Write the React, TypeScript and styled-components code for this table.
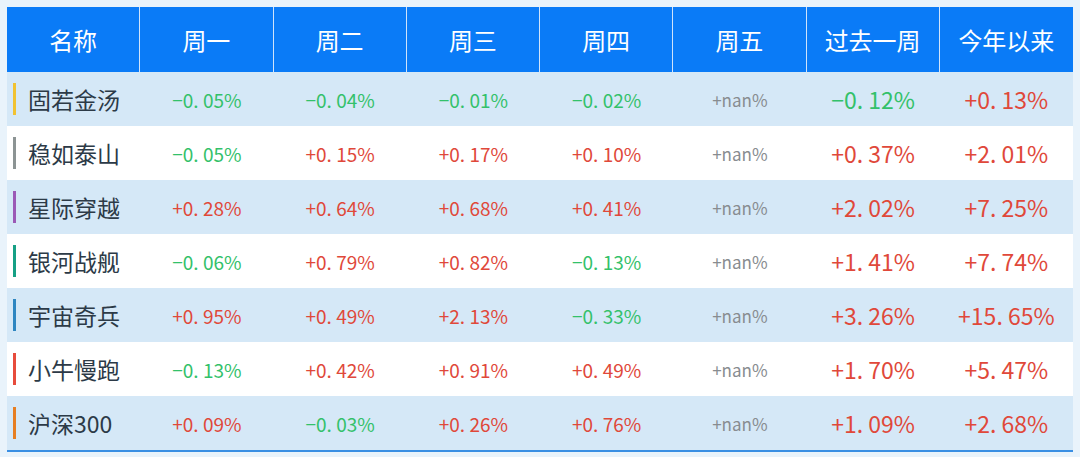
import React from "react";
import styled, { createGlobalStyle } from "styled-components";

const GlobalStyle = createGlobalStyle`
  html, body {
    margin: 0;
    padding: 0;
    background: #e9f3fb;
  }
  body {
    font-family: "Noto Sans CJK SC", "Noto Sans", sans-serif;
  }
`;

const Page = styled.div`
  width: 1080px;
  height: 457px;
  padding: 7px 7px 0 7px;
  box-sizing: border-box;
  background: #e9f3fb;
`;

const Table = styled.div`
  display: grid;
  grid-template-columns: repeat(8, 1fr);
  width: 1066px;
  border-bottom: 2px solid #3a8fe3;
`;

const HeadCell = styled.div<{ $last?: boolean }>`
  height: 65px;
  background: #0a7bf7;
  color: #ffffff;
  font-size: 24px;
  display: flex;
  align-items: center;
  justify-content: center;
  border-right: ${(p) => (p.$last ? "none" : "1px solid #cfe3fb")};
  box-sizing: border-box;
`;

const Cell = styled.div<{ $odd: boolean }>`
  height: 54px;
  background: ${(p) => (p.$odd ? "#d5e8f7" : "#ffffff")};
  display: flex;
  align-items: center;
  justify-content: center;
  box-sizing: border-box;
`;

const NameCell = styled(Cell)`
  justify-content: flex-start;
  padding-left: 6px;
  gap: 12px;
`;

const Bar = styled.span<{ $color: string }>`
  width: 3px;
  height: 32px;
  background: ${(p) => p.$color};
  flex: none;
`;

const Name = styled.span`
  font-size: 23px;
  color: #2c3a47;
`;

const Value = styled.span<{ $tone: "up" | "down" | "na"; $big?: boolean }>`
  font-size: ${(p) => (p.$big ? "23px" : p.$tone === "na" ? "17px" : "19px")};
  color: ${(p) =>
    p.$tone === "up" ? "#e0483a" : p.$tone === "down" ? "#33c16a" : "#888c90"};
  white-space: pre;
`;

const headers = ["名称", "周一", "周二", "周三", "周四", "周五", "过去一周", "今年以来"];

type Row = { name: string; color: string; vals: string[] };

const rows: Row[] = [
  { name: "固若金汤", color: "#f1c232", vals: ["-0.05", "-0.04", "-0.01", "-0.02", "nan", "-0.12", "+0.13"] },
  { name: "稳如泰山", color: "#8c9494", vals: ["-0.05", "+0.15", "+0.17", "+0.10", "nan", "+0.37", "+2.01"] },
  { name: "星际穿越", color: "#9b59b6", vals: ["+0.28", "+0.64", "+0.68", "+0.41", "nan", "+2.02", "+7.25"] },
  { name: "银河战舰", color: "#16a085", vals: ["-0.06", "+0.79", "+0.82", "-0.13", "nan", "+1.41", "+7.74"] },
  { name: "宇宙奇兵", color: "#2e86c1", vals: ["+0.95", "+0.49", "+2.13", "-0.33", "nan", "+3.26", "+15.65"] },
  { name: "小牛慢跑", color: "#e74c3c", vals: ["-0.13", "+0.42", "+0.91", "+0.49", "nan", "+1.70", "+5.47"] },
  { name: "沪深300", color: "#e67e22", vals: ["+0.09", "-0.03", "+0.26", "+0.76", "nan", "+1.09", "+2.68"] },
];

function fmt(v: string): { text: string; tone: "up" | "down" | "na" } {
  if (v === "nan") return { text: "+nan%", tone: "na" };
  const neg = v.startsWith("-");
  const body = v.slice(1).replace(".", ". ");
  return { text: (neg ? "−" : "+") + body + "%", tone: neg ? "down" : "up" };
}

export default function App() {
  return (
    <>
      <GlobalStyle />
      <Page>
        <Table>
          {headers.map((h, i) => (
            <HeadCell key={h} $last={i === headers.length - 1}>
              {h}
            </HeadCell>
          ))}
          {rows.map((r, ri) => {
            const odd = ri % 2 === 0;
            return (
              <React.Fragment key={r.name}>
                <NameCell $odd={odd}>
                  <Bar $color={r.color} />
                  <Name>{r.name}</Name>
                </NameCell>
                {r.vals.map((v, vi) => {
                  const f = fmt(v);
                  return (
                    <Cell key={vi} $odd={odd}>
                      <Value $tone={f.tone} $big={vi >= 5}>
                        {f.text}
                      </Value>
                    </Cell>
                  );
                })}
              </React.Fragment>
            );
          })}
        </Table>
      </Page>
    </>
  );
}
